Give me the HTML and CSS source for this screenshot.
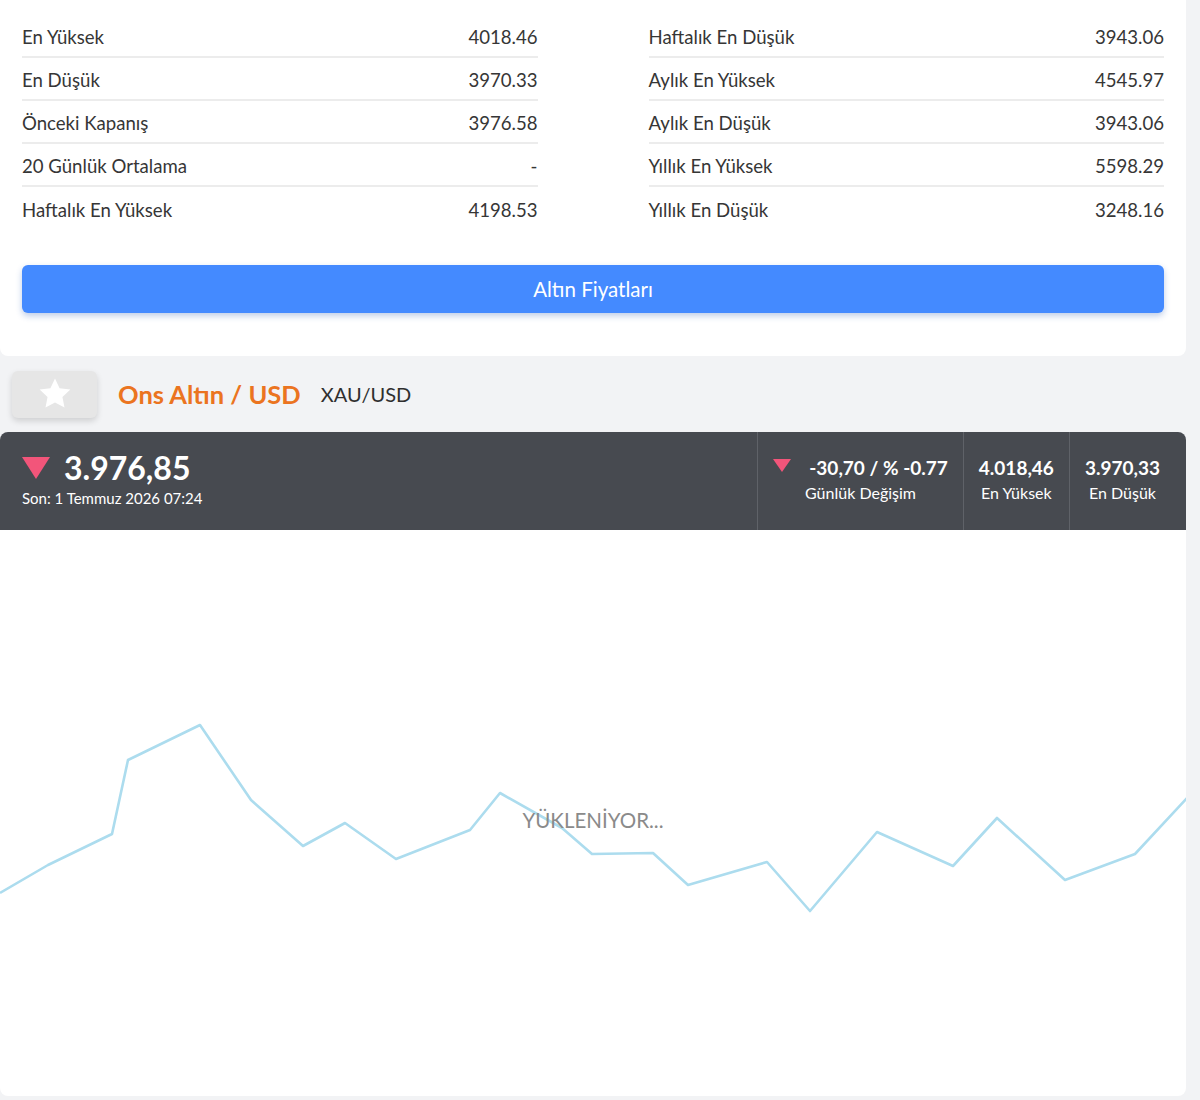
FILE: index.html
```html
<!doctype html>
<html lang="tr">
  <head>
    <meta charset="UTF-8" />
    <meta name="viewport" content="width=device-width, initial-scale=1.0" />
    <title>Ons Altın / USD</title>
    <link rel="stylesheet" href="styles.css">
  </head>
  <body>
    <div class="page">
      <section class="stats-card">
        <div class="stats-grid">
          <ul class="stats-list">
            <li class="stat-row"><span>En Yüksek</span><span>4018.46</span></li>
            <li class="stat-row"><span>En Düşük</span><span>3970.33</span></li>
            <li class="stat-row"><span>Önceki Kapanış</span><span>3976.58</span></li>
            <li class="stat-row"><span>20 Günlük Ortalama</span><span>-</span></li>
            <li class="stat-row"><span>Haftalık En Yüksek</span><span>4198.53</span></li>
          </ul>
          <ul class="stats-list">
            <li class="stat-row"><span>Haftalık En Düşük</span><span>3943.06</span></li>
            <li class="stat-row"><span>Aylık En Yüksek</span><span>4545.97</span></li>
            <li class="stat-row"><span>Aylık En Düşük</span><span>3943.06</span></li>
            <li class="stat-row"><span>Yıllık En Yüksek</span><span>5598.29</span></li>
            <li class="stat-row"><span>Yıllık En Düşük</span><span>3248.16</span></li>
          </ul>
        </div>
        <a class="btn-primary" href="#">Altın Fiyatları</a>
      </section>

      <header class="asset-header">
        <button class="fav-btn" type="button" aria-label="Favori">
          <svg width="38" height="38" viewBox="0 0 24 24">
            <path d="M12 2.2l2.9 6.2 6.8.8-5 4.7 1.3 6.7L12 17.3l-6 3.3 1.3-6.7-5-4.7 6.8-.8z" fill="#fff"/>
          </svg>
        </button>
        <h1 class="asset-title">Ons Altın / USD</h1>
        <span class="asset-code">XAU/USD</span>
      </header>

      <div class="quote-bar">
        <div class="quote-main">
          <div class="quote-price"><span class="tri-down big"></span>3.976,85</div>
          <div class="quote-time">Son: 1 Temmuz 2026 07:24</div>
        </div>
        <div class="quote-cell">
          <div class="cell-value"><span class="tri-down"></span>-30,70 / % -0.77</div>
          <div class="cell-label">Günlük Değişim</div>
        </div>
        <div class="quote-cell">
          <div class="cell-value">4.018,46</div>
          <div class="cell-label">En Yüksek</div>
        </div>
        <div class="quote-cell">
          <div class="cell-value">3.970,33</div>
          <div class="cell-label">En Düşük</div>
        </div>
      </div>

      <div class="chart-card">
        <svg class="chart-line" width="1186" height="566" viewBox="0 530 1186 566">
          <polyline fill="none" stroke="#acdcee" stroke-width="2.6" stroke-linejoin="round"
            points="0,893 48,865 112,834 128,760 200,725 251,800 303,846 345,823 396,859 470,830 500,793 562,828 592,854 653,853 688,885 767,862 810,911 877,832 953,866 997,818 1065,880 1135,854 1188,797"/>
        </svg>
        <div class="chart-loading">YÜKLENİYOR...</div>
      </div>
    </div>
  </body>
</html>
```

FILE: styles.css
```css
html {
  height: 100%;
}

body {
  margin: 0;
  min-height: 100%;
  background: #f2f3f5;
  font-family: Lato, "Noto Sans", sans-serif;
  color: #333;
}

.page {
  width: 1186px;
}

/* stats card */
.stats-card {
  background: #fff;
  border-radius: 0 0 8px 8px;
  padding: 15px 22px 43px;
}

.stats-grid {
  display: grid;
  grid-template-columns: 1fr 1fr;
  column-gap: 111px;
}

.stats-list {
  list-style: none;
  margin: 0;
  padding: 0;
}

.stat-row {
  display: flex;
  justify-content: space-between;
  align-items: center;
  height: 43px;
  box-sizing: border-box;
  padding-top: 2px;
  border-bottom: 2px solid #ececec;
  font-size: 18.6px;
  color: #363636;
}

.stat-row:last-child {
  border-bottom: 0;
}

.btn-primary {
  display: flex;
  align-items: center;
  justify-content: center;
  margin-top: 35px;
  height: 48px;
  border-radius: 6px;
  background: #448aff;
  box-shadow: 0 3px 6px rgba(40, 90, 180, 0.3);
  color: #fff;
  font-size: 20.5px;
  text-decoration: none;
}

/* asset header */
.asset-header {
  display: flex;
  align-items: center;
  height: 76px;
  padding-left: 12px;
}

.fav-btn {
  display: flex;
  align-items: center;
  justify-content: center;
  width: 85px;
  height: 47px;
  margin-right: 21px;
  border: 0;
  border-radius: 6px;
  background: #e6e6e6;
  box-shadow: 0 3px 6px rgba(0, 0, 0, 0.15);
}

.asset-title {
  margin: 0 20px 0 0;
  font-size: 25.5px;
  font-weight: 700;
  color: #eb7420;
}

.asset-code {
  font-size: 20px;
  color: #2f2f2f;
}

/* quote bar */
.quote-bar {
  display: flex;
  height: 98px;
  padding-right: 11px;
  background: #474a50;
  border-radius: 8px 8px 0 0;
  color: #fff;
}

.quote-main {
  flex: 1;
  padding: 20px 22px 0;
}

.quote-price {
  display: flex;
  align-items: center;
  font-size: 32px;
  font-weight: 700;
  line-height: 32px;
}

.quote-time {
  margin-top: 5px;
  font-size: 15px;
}

.tri-down {
  display: inline-block;
  width: 0;
  height: 0;
  margin-right: 18px;
  border-left: 9px solid transparent;
  border-right: 9px solid transparent;
  border-top: 13px solid #f2557a;
  vertical-align: 3px;
}

.tri-down.big {
  margin-right: 14px;
  border-left-width: 14px;
  border-right-width: 14px;
  border-top-width: 22px;
}

.quote-cell {
  padding: 24px 15px 0;
  border-left: 1px solid #5f6268;
  text-align: center;
}

.cell-value {
  font-size: 19px;
  font-weight: 700;
}

.cell-label {
  margin-top: 4px;
  font-size: 16px;
}

/* chart */
.chart-card {
  position: relative;
  height: 566px;
  background: #fff;
  border-radius: 0 0 8px 8px;
  overflow: hidden;
}

.chart-line {
  display: block;
}

.chart-loading {
  position: absolute;
  top: 278px;
  left: 0;
  right: 0;
  text-align: center;
  font-size: 20.5px;
  color: #8a8a8a;
}
```
